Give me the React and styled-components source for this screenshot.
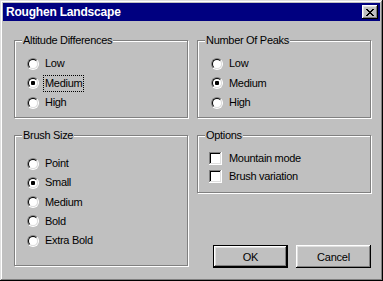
import styled, { createGlobalStyle } from "styled-components";

const GlobalStyle = createGlobalStyle`
  html, body {
    margin: 0;
    padding: 0;
    background: #c0c0c0;
  }
  body {
    font-family: "Liberation Sans", Arial, sans-serif;
    font-size: 11px;
    color: #000;
  }
`;

const Window = styled.div`
  width: 383px;
  height: 281px;
  box-sizing: border-box;
  padding: 3px;
  background: #c0c0c0;
  box-shadow: inset -1px -1px #000, inset 1px 1px #dfdfdf,
    inset -2px -2px #808080, inset 2px 2px #fff;
`;

const TitleBar = styled.div`
  height: 18px;
  background: #000080;
  display: flex;
  align-items: center;
  justify-content: space-between;
  padding: 0 2px 0 3px;
`;

const Title = styled.span`
  color: #fff;
  font-weight: bold;
  font-size: 12px;
  letter-spacing: -0.2px;
`;

const CloseButton = styled.div`
  width: 16px;
  height: 14px;
  box-sizing: border-box;
  background: #c0c0c0;
  box-shadow: inset -1px -1px #000, inset 1px 1px #fff,
    inset -2px -2px #808080, inset 2px 2px #dfdfdf;
  display: flex;
  align-items: center;
  justify-content: center;
  padding-right: 1px;
`;

const Body = styled.div`
  display: grid;
  grid-template-columns: 174px 174px;
  grid-template-rows: 78px 131px;
  column-gap: 9px;
  row-gap: 17px;
  padding: 19px 0 0 11px;
`;

const GroupBox = styled.div`
  position: relative;
  box-sizing: border-box;
  height: ${(p) => p.$height || "100%"};
  border: 1px solid #808080;
  box-shadow: inset 1px 1px 0 #fff, 1px 1px 0 #fff;
  padding: ${(p) => p.$pad || "13px 0 0 12px"};
`;

const Legend = styled.span`
  position: absolute;
  top: -8px;
  left: 7px;
  padding: 0 1px;
  line-height: 15px;
  background: #c0c0c0;
  letter-spacing: -0.3px;
`;

const Row = styled.div`
  display: flex;
  align-items: center;
  height: ${(p) => p.$h || "19.5px"};
`;

const Radio = styled.span`
  position: relative;
  width: 12px;
  height: 12px;
  box-sizing: border-box;
  border-radius: 50%;
  border: 1px solid;
  border-color: #808080 #fff #fff #808080;
  flex: none;

  &::before {
    content: "";
    position: absolute;
    inset: 0;
    border-radius: 50%;
    border: 1px solid;
    border-color: #000 #dfdfdf #dfdfdf #000;
    background: #fff;
  }

  &::after {
    content: "";
    display: ${(p) => (p.$checked ? "block" : "none")};
    position: absolute;
    left: 3px;
    top: 3px;
    width: 4px;
    height: 4px;
    border-radius: 1px;
    background: #000;
  }
`;

const Check = styled.span`
  width: 13px;
  height: 13px;
  box-sizing: border-box;
  background: #fff;
  box-shadow: inset -1px -1px #fff, inset 1px 1px #808080,
    inset -2px -2px #dfdfdf, inset 2px 2px #000;
  flex: none;
`;

const Label = styled.span`
  margin-left: ${(p) => p.$gap || "4px"};
  padding: 0 1px;
  line-height: 15px;
  border: 1px dotted ${(p) => (p.$focus ? "#000" : "transparent")};
  letter-spacing: -0.3px;
`;

const RightColumn = styled.div`
  display: flex;
  flex-direction: column;
`;

const ButtonRow = styled.div`
  margin-top: auto;
  margin-bottom: -2px;
  display: flex;
  justify-content: flex-end;
  gap: 8px;
`;

const Button = styled.div`
  width: 75px;
  height: 23px;
  box-sizing: border-box;
  display: flex;
  align-items: center;
  justify-content: center;
  background: #c0c0c0;
  box-shadow: ${(p) =>
    p.$default
      ? "inset 0 0 0 1px #000, inset -2px -2px #000, inset 2px 2px #fff, inset -3px -3px #808080, inset 3px 3px #dfdfdf"
      : "inset -1px -1px #000, inset 1px 1px #fff, inset -2px -2px #808080, inset 2px 2px #dfdfdf"};
  letter-spacing: -0.2px;
`;

const CloseIcon = () => (
  <svg width="8" height="7" viewBox="0 0 8 7" shapeRendering="crispEdges">
    <path
      fill="#000"
      d="M0 0h2v1H0zM6 0h2v1H6zM1 1h2v1H1zM5 1h2v1H5zM2 2h4v1H2zM3 3h2v1H3zM2 4h4v1H2zM1 5h2v1H1zM5 5h2v1H5zM0 6h2v1H0zM6 6h2v1H6z"
    />
  </svg>
);

const RadioGroup = ({ title, items, selected, focus, pad, rowH }) => (
  <GroupBox $pad={pad}>
    <Legend>{title}</Legend>
    {items.map((item) => (
      <Row key={item} $h={rowH}>
        <Radio $checked={item === selected} />
        <Label $focus={focus && item === selected}>{item}</Label>
      </Row>
    ))}
  </GroupBox>
);

export default function App() {
  return (
    <>
      <GlobalStyle />
      <Window>
        <TitleBar>
          <Title>Roughen Landscape</Title>
          <CloseButton>
            <CloseIcon />
          </CloseButton>
        </TitleBar>
        <Body>
          <RadioGroup
            title="Altitude Differences"
            items={["Low", "Medium", "High"]}
            selected="Medium"
            focus
          />
          <RadioGroup
            title="Number Of Peaks"
            items={["Low", "Medium", "High"]}
            selected="Medium"
            pad="13px 0 0 13px"
          />
          <RadioGroup
            title="Brush Size"
            items={["Point", "Small", "Medium", "Bold", "Extra Bold"]}
            selected="Small"
            pad="18px 0 0 12px"
            rowH="19.25px"
          />
          <RightColumn>
            <GroupBox $height="58px" $pad="13px 0 0 11px">
              <Legend>Options</Legend>
              <Row $h="18px">
                <Check />
                <Label $gap="5px">Mountain mode</Label>
              </Row>
              <Row $h="18px">
                <Check />
                <Label $gap="5px">Brush variation</Label>
              </Row>
            </GroupBox>
            <ButtonRow>
              <Button $default>OK</Button>
              <Button>Cancel</Button>
            </ButtonRow>
          </RightColumn>
        </Body>
      </Window>
    </>
  );
}
